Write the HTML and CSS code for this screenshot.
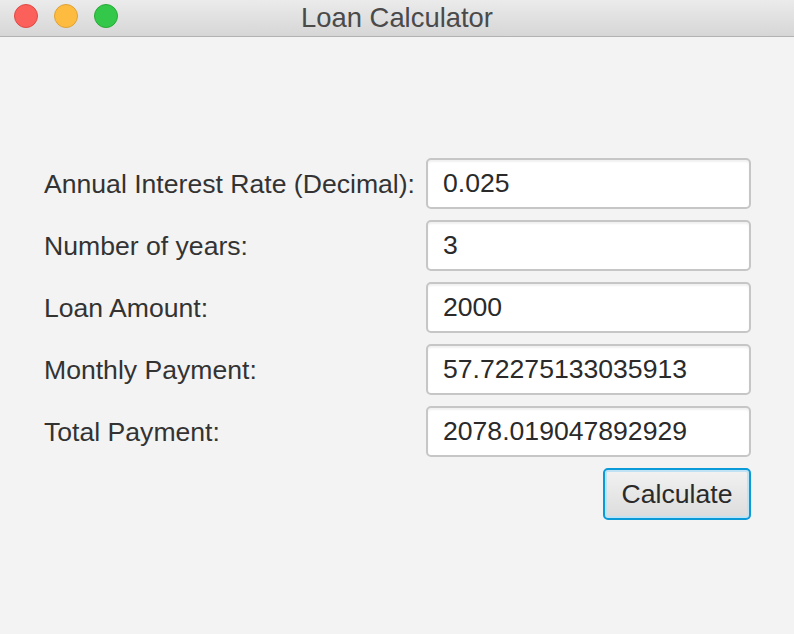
FILE: index.html
```html
<!DOCTYPE html>
<html>
<head>
<meta charset="utf-8">
<link rel="stylesheet" href="styles.css">
</head>
<body>
<div class="window">
  <div class="titlebar">
    <div class="lights">
      <span class="light red"></span>
      <span class="light yellow"></span>
      <span class="light green"></span>
    </div>
    <div class="title">Loan Calculator</div>
  </div>
  <div class="content">
    <div class="form">
      <label class="label">Annual Interest Rate (Decimal):</label>
      <div class="field">0.025</div>
      <label class="label">Number of years:</label>
      <div class="field">3</div>
      <label class="label">Loan Amount:</label>
      <div class="field">2000</div>
      <label class="label">Monthly Payment:</label>
      <div class="field">57.72275133035913</div>
      <label class="label">Total Payment:</label>
      <div class="field">2078.019047892929</div>
      <div class="actions"><button class="btn">Calculate</button></div>
    </div>
  </div>
</div>
</body>
</html>
```
FILE: styles.css
```css
html, body {
  margin: 0;
  padding: 0;
  width: 794px;
  height: 634px;
  overflow: hidden;
  background: #f3f3f3;
  font-family: "Liberation Sans", Arial, sans-serif;
}
.window {
  width: 794px;
  height: 634px;
  display: flex;
  flex-direction: column;
}
.titlebar {
  height: 36px;
  border-bottom: 1px solid #b2b2b2;
  background: linear-gradient(#ebebeb, #d6d6d6);
  display: flex;
  align-items: center;
  position: relative;
}
.lights {
  display: flex;
  gap: 16px;
  padding-left: 14px;
  position: absolute;
  left: 0;
  top: 4px;
}
.light {
  width: 24px;
  height: 24px;
  border-radius: 50%;
  box-sizing: border-box;
  display: block;
}
.red { background: #fc605b; border: 1px solid #de4a45; }
.yellow { background: #fdbc40; border: 1px solid #dea236; }
.green { background: #34c84a; border: 1px solid #27aa35; }
.title {
  flex: 1;
  text-align: center;
  font-size: 27.4px;
  color: #4a4a4a;
  line-height: 36px;
}
.content {
  padding: 121px 43px 0 44px;
}
.form {
  display: grid;
  grid-template-columns: 1fr 325px;
  row-gap: 11px;
  align-items: center;
}
.label {
  font-size: 26.6px;
  color: #333;
  padding-top: 2px;
}
.field {
  height: 51px;
  box-sizing: border-box;
  border: 2px solid #c6c6c6;
  border-radius: 5px;
  background: #fff;
  box-shadow: inset 0 2px 2px rgba(0,0,0,0.06);
  font-size: 26.6px;
  color: #2a2a2a;
  padding-left: 15px;
  display: flex;
  align-items: center;
}
.actions {
  grid-column: 2;
  display: flex;
  justify-content: flex-end;
}
.btn {
  width: 148px;
  height: 52px;
  box-sizing: border-box;
  border: 2px solid #0a9ad8;
  border-radius: 5px;
  box-shadow: inset 0 0 0 2px #bfe2f4;
  background: linear-gradient(#f2f2f2, #dcdcdc);
  font-family: "Liberation Sans", Arial, sans-serif;
  font-size: 26.6px;
  color: #2a2a2a;
  padding: 0;
}
```
